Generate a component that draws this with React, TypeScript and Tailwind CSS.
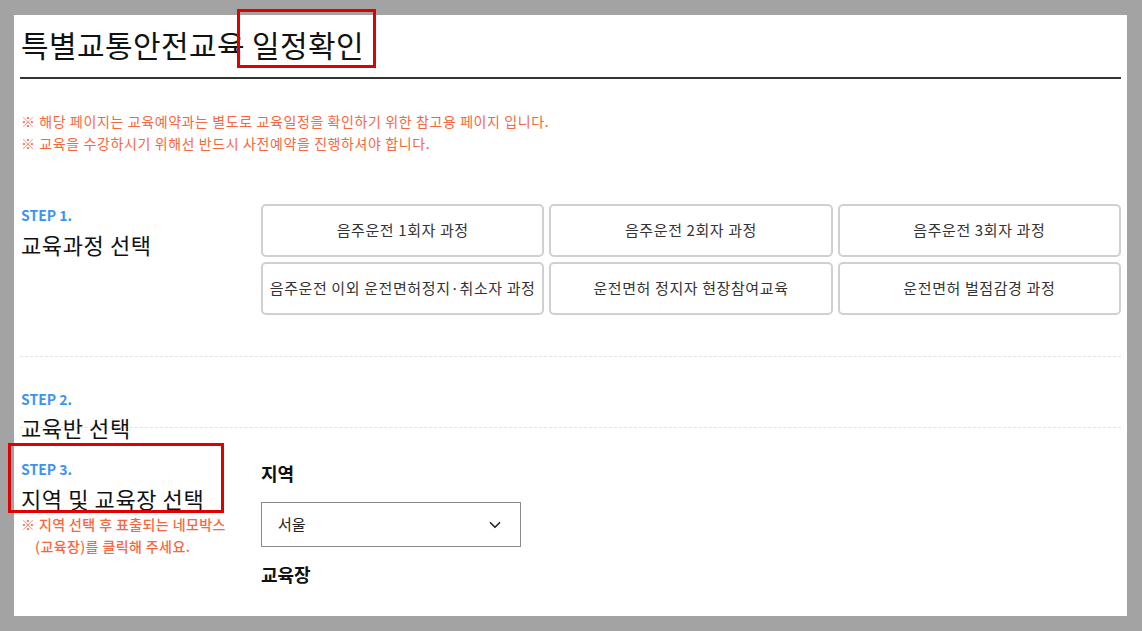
import { ChevronDown } from "lucide-react";

const courses = [
	"음주운전 1회자 과정",
	"음주운전 2회자 과정",
	"음주운전 3회자 과정",
	"음주운전 이외 운전면허정지·취소자 과정",
	"운전면허 정지자 현장참여교육",
	"운전면허 벌점감경 과정",
];

function StepLabel({ n }: { n: number }) {
	return (
		<div className="text-[14px] leading-[18px] font-bold text-[#3d94ee]">
			STEP {n}.
		</div>
	);
}

export default function App() {
	return (
		<div
			className="relative h-[631px] w-[1142px] overflow-hidden bg-[#a3a3a3] pt-[15px] pl-[14px]"
			style={{ fontFamily: '"Noto Sans CJK KR", "Noto Sans", sans-serif' }}
		>
			<div className="h-[601px] w-[1113px] bg-white px-[6px] text-[#111]">
				{/* Title */}
				<div className="h-[64px] border-b-2 border-[#333] pt-[10px] pl-[1px]">
					<h1 className="text-[30px] leading-[38px] font-normal tracking-[0.4px]">
						특별교통안전교육 일정확인
					</h1>
				</div>

				{/* Notice */}
				<div className="mt-[31px] pl-[1px] text-[14px] leading-[22px] tracking-[0.6px] text-[#f5683f]">
					<p>※ 해당 페이지는 교육예약과는 별도로 교육일정을 확인하기 위한 참고용 페이지 입니다.</p>
					<p>※ 교육을 수강하시기 위해선 반드시 사전예약을 진행하셔야 합니다.</p>
				</div>

				{/* Step 1 */}
				<div className="mt-[50px] flex border-b border-dashed border-[#e2e2e2] pb-[41px]">
					<div className="w-[241px] shrink-0 pt-[2px] pl-[1px]">
						<StepLabel n={1} />
						<div className="mt-[6px] text-[22px] leading-[28px] font-normal tracking-[0.6px]">
							교육과정 선택
						</div>
					</div>
					<div className="grid flex-1 grid-cols-3 gap-[5px]">
						{courses.map((c) => (
							<button
								key={c}
								className="h-[53px] rounded-[5px] border-2 border-[#d0d0d0] bg-white text-[15px] text-[#333] tracking-[0.6px]"
							>
								{c}
							</button>
						))}
					</div>
				</div>

				{/* Step 2 */}
				<div className="h-[70px] pt-[33px] pl-[1px]">
					<StepLabel n={2} />
					<div className="mt-[5px] text-[22px] leading-[28px] font-normal tracking-[0.6px]">
						교육반 선택
					</div>
				</div>

				{/* Step 3 */}
				<div className="flex border-t border-dashed border-[#e2e2e2]">
					<div className="w-[241px] shrink-0 pt-[32px] pl-[1px]">
						<StepLabel n={3} />
						<div className="mt-[6px] text-[22px] leading-[28px] font-normal tracking-[0.6px]">
							지역 및 교육장 선택
						</div>
						<div className="mt-[1px] text-[14px] leading-[22px] font-medium tracking-[0.4px] text-[#f5683f]">
							<p>※ 지역 선택 후 표출되는 네모박스</p>
							<p className="pl-[14px]">(교육장)를 클릭해 주세요.</p>
						</div>
					</div>
					<div className="pt-[33px]">
						<div className="text-[18px] leading-[24px] font-bold">지역</div>
						<div className="mt-[17px] flex h-[45px] w-[260px] items-center justify-between border border-[#8a8a8a] pr-[16px] pl-[16px]">
							<span className="text-[15px] text-[#222]">서울</span>
							<ChevronDown className="h-[18px] w-[18px] text-[#222]" strokeWidth={2.2} />
						</div>
						<div className="mt-[15px] text-[18px] leading-[24px] font-bold">교육장</div>
					</div>
				</div>
			</div>

			{/* highlight boxes */}
			<div className="absolute top-[9px] left-[237px] h-[59px] w-[139px] border-[3px] border-[#e00000]" />
			<div className="absolute top-[443px] left-[8px] h-[70px] w-[216px] border-[3px] border-[#e00000]" />
		</div>
	);
}
